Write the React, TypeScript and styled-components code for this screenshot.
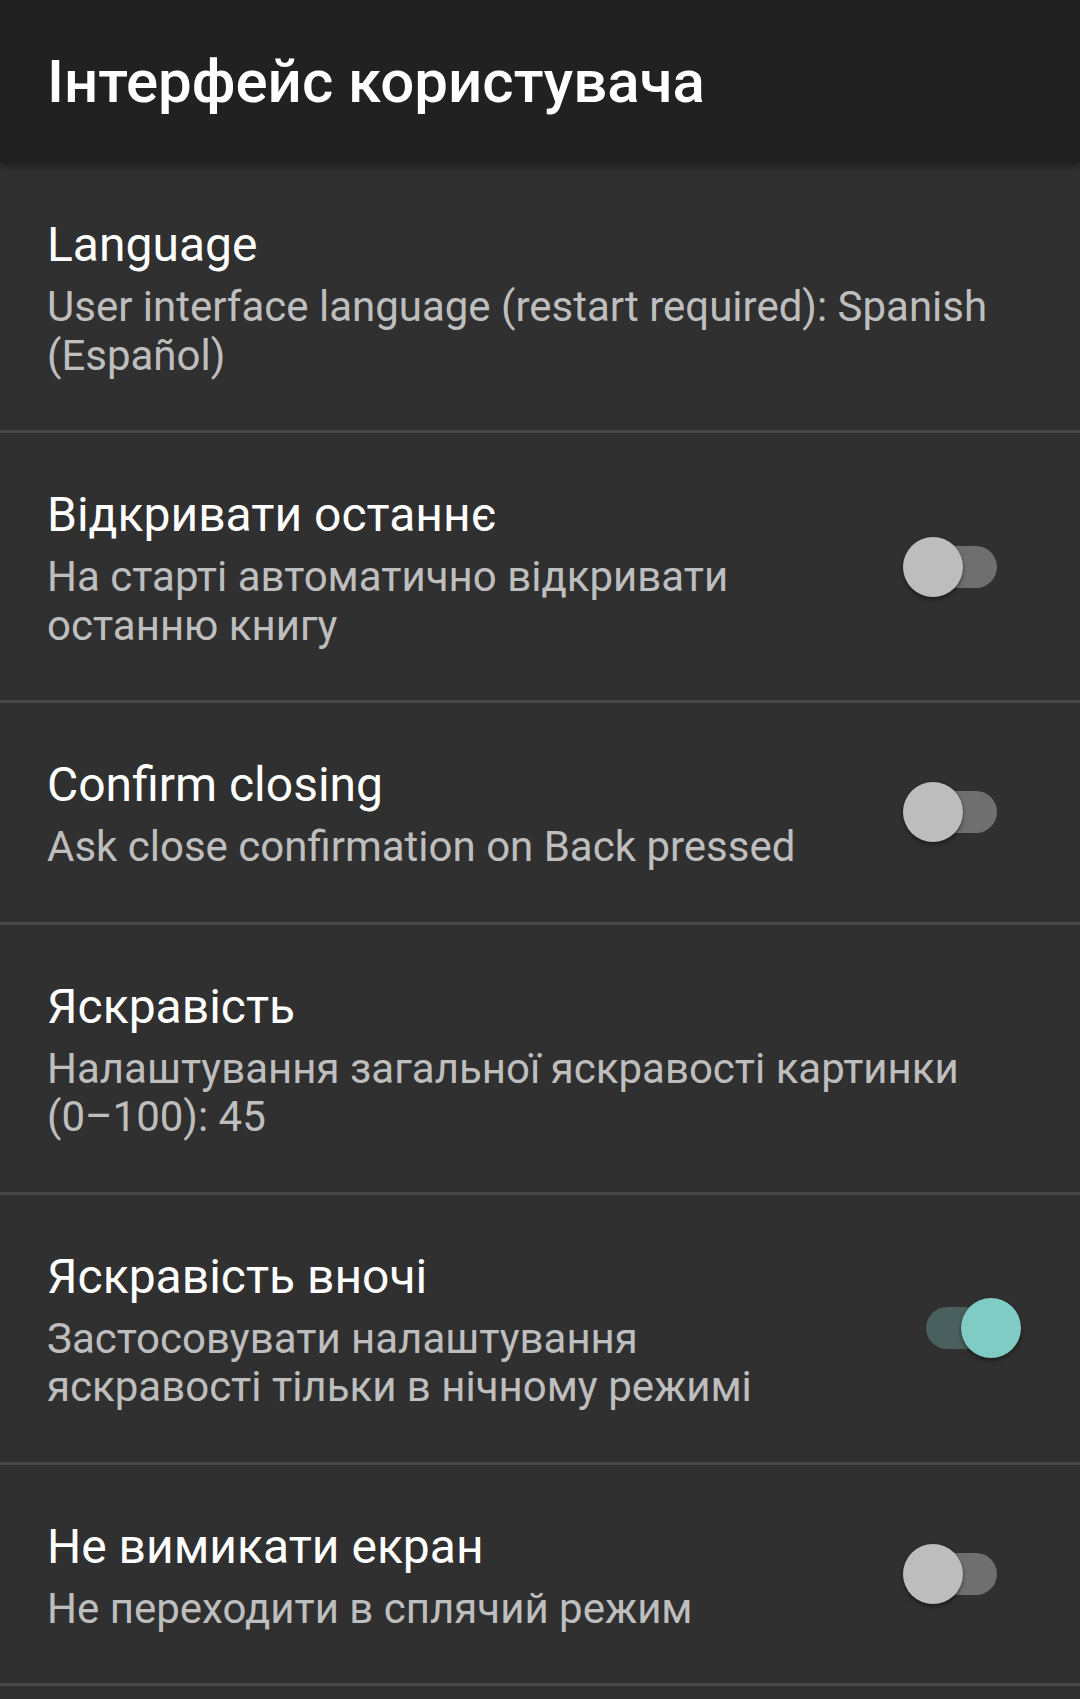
import React from "react";
import styled, { createGlobalStyle } from "styled-components";

const GlobalStyle = createGlobalStyle`
  html, body {
    margin: 0;
    padding: 0;
    background: #303030;
  }
  body {
    font-family: Roboto, "Noto Sans", "Liberation Sans", sans-serif;
    -webkit-font-smoothing: antialiased;
  }
  * { box-sizing: border-box; }
`;

const Screen = styled.div`
  width: 1080px;
  min-height: 1699px;
  background: #303030;
  display: flex;
  flex-direction: column;
`;

const Toolbar = styled.header`
  height: 163px;
  background: #212121;
  display: flex;
  align-items: center;
  padding-left: 47px;
  position: relative;
  z-index: 1;
  box-shadow: 0 2px 8px rgba(0, 0, 0, 0.45);
`;

const ToolbarTitle = styled.h1`
  margin: 0;
  font-size: 60px;
  line-height: 70px;
  font-weight: 500;
  color: #ffffff;
`;

const List = styled.div`
  display: flex;
  flex-direction: column;
`;

const Row = styled.div`
  display: flex;
  align-items: center;
  padding: 54px 0 50px 47px;
  border-bottom: 3px solid #484848;
`;

const Texts = styled.div<{ $withWidget: boolean }>`
  flex: ${(p) => (p.$withWidget ? "0 0 756px" : "1 1 auto")};
  padding-right: ${(p) => (p.$withWidget ? "0" : "40px")};
  display: flex;
  flex-direction: column;
  gap: 10px;
  min-width: 0;
`;

const Title = styled.div`
  font-size: 48px;
  line-height: 56px;
  color: #ffffff;
  font-weight: 400;
`;

const Summary = styled.div`
  font-size: 42px;
  line-height: 48.5px;
  color: rgba(255, 255, 255, 0.7);
  font-weight: 400;
`;

const NoWrap = styled.span`
  white-space: nowrap;
`;

const WidgetFrame = styled.div`
  flex: 1 1 auto;
  display: flex;
  align-items: center;
  align-self: stretch;
  margin-top: -54px;
  margin-bottom: -50px;
`;

const Track = styled.div<{ $on: boolean }>`
  position: relative;
  width: 94px;
  height: 42px;
  border-radius: 21px;
  margin-left: ${(p) => (p.$on ? "123px" : "100px")};
  background: ${(p) => (p.$on ? "#4a605e" : "#6f6f6f")};
`;

const Thumb = styled.div<{ $on: boolean }>`
  position: absolute;
  top: 50%;
  left: ${(p) => (p.$on ? "35px" : "0px")};
  width: 60px;
  height: 60px;
  margin-top: -30px;
  border-radius: 50%;
  background: ${(p) => (p.$on ? "#80cbc4" : "#bdbdbd")};
  box-shadow: 0 3px 4px rgba(0, 0, 0, 0.35), 0 0 2px rgba(0, 0, 0, 0.3);
`;

type Pref = {
  title: string;
  summary: React.ReactNode;
  toggle?: boolean;
};

const prefs: Pref[] = [
  {
    title: "Language",
    summary: "User interface language (restart required): Spanish (Español)",
  },
  {
    title: "Відкривати останнє",
    summary: "На старті автоматично відкривати останню книгу",
    toggle: false,
  },
  {
    title: "Confirm closing",
    summary: "Ask close confirmation on Back pressed",
    toggle: false,
  },
  {
    title: "Яскравість",
    summary: (
      <>
        Налаштування загальної яскравості картинки <NoWrap>(0–100):</NoWrap> 45
      </>
    ),
  },
  {
    title: "Яскравість вночі",
    summary: "Застосовувати налаштування яскравості тільки в нічному режимі",
    toggle: true,
  },
  {
    title: "Не вимикати екран",
    summary: "Не переходити в сплячий режим",
    toggle: false,
  },
];

const Switch: React.FC<{ on: boolean }> = ({ on }) => (
  <Track $on={on}>
    <Thumb $on={on} />
  </Track>
);

export default function App() {
  return (
    <Screen>
      <GlobalStyle />
      <Toolbar>
        <ToolbarTitle>Інтерфейс користувача</ToolbarTitle>
      </Toolbar>
      <List>
        {prefs.map((p) => {
          const hasWidget = typeof p.toggle === "boolean";
          return (
            <Row key={p.title}>
              <Texts $withWidget={hasWidget}>
                <Title>{p.title}</Title>
                <Summary>{p.summary}</Summary>
              </Texts>
              {hasWidget && (
                <WidgetFrame>
                  <Switch on={!!p.toggle} />
                </WidgetFrame>
              )}
            </Row>
          );
        })}
      </List>
    </Screen>
  );
}
